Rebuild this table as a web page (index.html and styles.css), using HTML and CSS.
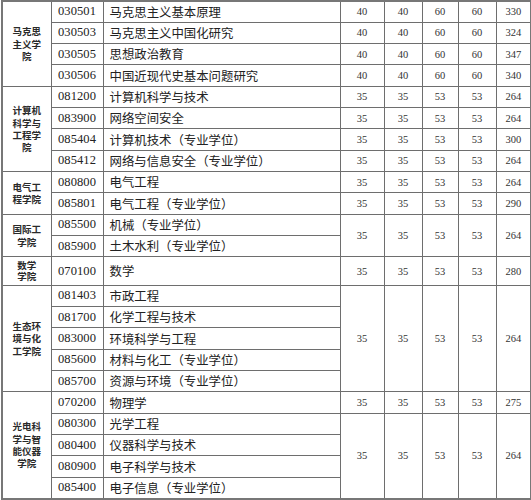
FILE: index.html
```html
<!DOCTYPE html>
<html lang="zh">
<head>
<meta charset="utf-8">
<link rel="stylesheet" href="styles.css">
</head>
<body>
<table class="grid">
  <colgroup>
    <col class="c-college"><col class="c-code"><col class="c-name">
    <col class="c-s1"><col class="c-s2"><col class="c-s3"><col class="c-s4"><col class="c-total">
  </colgroup>
  <tbody>
    <tr><td class="college" rowspan="4"><span class="cname">马克思主义学院</span></td><td class="code">030501</td><td class="name">马克思主义基本原理</td><td class="score">40</td><td class="score">40</td><td class="score">60</td><td class="score">60</td><td class="score">330</td></tr>
    <tr><td class="code">030503</td><td class="name">马克思主义中国化研究</td><td class="score">40</td><td class="score">40</td><td class="score">60</td><td class="score">60</td><td class="score">324</td></tr>
    <tr><td class="code">030505</td><td class="name">思想政治教育</td><td class="score">40</td><td class="score">40</td><td class="score">60</td><td class="score">60</td><td class="score">347</td></tr>
    <tr><td class="code">030506</td><td class="name">中国近现代史基本问题研究</td><td class="score">40</td><td class="score">40</td><td class="score">60</td><td class="score">60</td><td class="score">340</td></tr>

    <tr><td class="college" rowspan="4"><span class="cname">计算机科学与工程学院</span></td><td class="code">081200</td><td class="name">计算机科学与技术</td><td class="score">35</td><td class="score">35</td><td class="score">53</td><td class="score">53</td><td class="score">264</td></tr>
    <tr><td class="code">083900</td><td class="name">网络空间安全</td><td class="score">35</td><td class="score">35</td><td class="score">53</td><td class="score">53</td><td class="score">264</td></tr>
    <tr><td class="code">085404</td><td class="name">计算机技术（专业学位）</td><td class="score">35</td><td class="score">35</td><td class="score">53</td><td class="score">53</td><td class="score">300</td></tr>
    <tr><td class="code">085412</td><td class="name">网络与信息安全（专业学位）</td><td class="score">35</td><td class="score">35</td><td class="score">53</td><td class="score">53</td><td class="score">264</td></tr>

    <tr><td class="college" rowspan="2"><span class="cname">电气工程学院</span></td><td class="code">080800</td><td class="name">电气工程</td><td class="score">35</td><td class="score">35</td><td class="score">53</td><td class="score">53</td><td class="score">264</td></tr>
    <tr><td class="code">085801</td><td class="name">电气工程（专业学位）</td><td class="score">35</td><td class="score">35</td><td class="score">53</td><td class="score">53</td><td class="score">290</td></tr>

    <tr><td class="college" rowspan="2"><span class="cname">国际工学院</span></td><td class="code">085500</td><td class="name">机械（专业学位）</td><td class="score" rowspan="2">35</td><td class="score" rowspan="2">35</td><td class="score" rowspan="2">53</td><td class="score" rowspan="2">53</td><td class="score" rowspan="2">264</td></tr>
    <tr><td class="code">085900</td><td class="name">土木水利（专业学位）</td></tr>

    <tr class="tall"><td class="college"><span class="cname short">数学学院</span></td><td class="code">070100</td><td class="name">数学</td><td class="score">35</td><td class="score">35</td><td class="score">53</td><td class="score">53</td><td class="score">280</td></tr>

    <tr><td class="college" rowspan="5"><span class="cname">生态环境与化工学院</span></td><td class="code">081403</td><td class="name">市政工程</td><td class="score" rowspan="5">35</td><td class="score" rowspan="5">35</td><td class="score" rowspan="5">53</td><td class="score" rowspan="5">53</td><td class="score" rowspan="5">264</td></tr>
    <tr><td class="code">081700</td><td class="name">化学工程与技术</td></tr>
    <tr><td class="code">083000</td><td class="name">环境科学与工程</td></tr>
    <tr><td class="code">085600</td><td class="name">材料与化工（专业学位）</td></tr>
    <tr><td class="code">085700</td><td class="name">资源与环境（专业学位）</td></tr>

    <tr><td class="college" rowspan="5"><span class="cname">光电科学与智能仪器学院</span></td><td class="code">070200</td><td class="name">物理学</td><td class="score">35</td><td class="score">35</td><td class="score">53</td><td class="score">53</td><td class="score">275</td></tr>
    <tr><td class="code">080300</td><td class="name">光学工程</td><td class="score" rowspan="4">35</td><td class="score" rowspan="4">35</td><td class="score" rowspan="4">53</td><td class="score" rowspan="4">53</td><td class="score" rowspan="4">264</td></tr>
    <tr><td class="code">080400</td><td class="name">仪器科学与技术</td></tr>
    <tr><td class="code">080900</td><td class="name">电子科学与技术</td></tr>
    <tr><td class="code">085400</td><td class="name">电子信息（专业学位）</td></tr>
  </tbody>
</table>
</body>
</html>
```

FILE: styles.css
```css
html, body {
  margin: 0;
  padding: 0;
  background: #ffffff;
}

body {
  padding-left: 1px;
}

.grid {
  border-collapse: collapse;
  table-layout: fixed;
  width: 530px;
  border: 2px solid #777777;
  color: #1f1f1f;
}

.c-college { width: 49px; }
.c-code { width: 52px; }
.c-name { width: 237px; }
.c-s1 { width: 44px; }
.c-s2 { width: 38px; }
.c-s3 { width: 36px; }
.c-s4 { width: 38px; }
.c-total { width: 35px; }

.grid tr {
  height: 21.33px;
}

.grid tr.tall {
  height: 28.3px;
}

.grid td {
  border: 1px solid #6e6e6e;
  padding: 0;
  vertical-align: middle;
  white-space: nowrap;
  overflow: hidden;
}

.college {
  text-align: center;
}

.cname {
  display: inline-block;
  width: 3em;
  white-space: normal;
  font-family: "Noto Sans CJK SC", sans-serif;
  font-size: 9.5px;
  font-weight: 700;
  line-height: 12.3px;
  color: #2a2a2a;
  vertical-align: middle;
}

.cname.short {
  width: 2em;
  line-height: 11px;
}

.code {
  text-align: center;
  font-family: "Liberation Serif", serif;
  font-size: 12.5px;
  letter-spacing: 0.1px;
  color: #222222;
}

.name {
  padding-left: 6px !important;
  font-family: "Noto Sans CJK SC", sans-serif;
  font-size: 12.4px;
  font-weight: 400;
  color: #222222;
}

.score {
  text-align: center;
  font-family: "Liberation Serif", serif;
  font-size: 10.5px;
  color: #333333;
}
```
